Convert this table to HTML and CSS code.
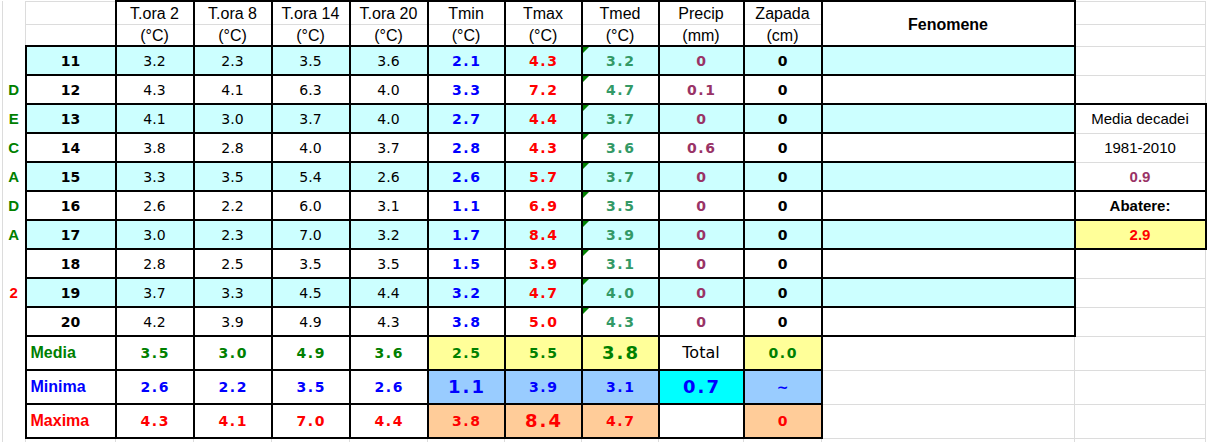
FILE: index.html
```html
<!DOCTYPE html>
<html lang="ro">
<head>
<meta charset="utf-8">
<title>Decada 2</title>
<link rel="stylesheet" href="styles.css">
</head>
<body>
<table class="sheet">
  <colgroup>
    <col class="c-a"><col class="c-b">
    <col class="c-w"><col class="c-w"><col class="c-w"><col class="c-w">
    <col class="c-n"><col class="c-n"><col class="c-n">
    <col class="c-j"><col class="c-k"><col class="c-l"><col class="c-m">
  </colgroup>
  <tr class="r-h1">
    <td class="a"></td><td></td>
    <td class="ht">T.ora 2</td><td class="ht">T.ora 8</td><td class="ht">T.ora 14</td><td class="ht">T.ora 20</td>
    <td class="ht">Tmin</td><td class="ht">Tmax</td><td class="ht">Tmed</td><td class="ht">Precip</td><td class="ht">Zapada</td>
    <td class="fen" rowspan="2">Fenomene</td><td></td>
  </tr>
  <tr class="r-h2">
    <td class="a"></td><td></td>
    <td class="hb">(°C)</td><td class="hb">(°C)</td><td class="hb">(°C)</td><td class="hb">(°C)</td>
    <td class="hb">(°C)</td><td class="hb">(°C)</td><td class="hb">(°C)</td><td class="hb">(mm)</td><td class="hb">(cm)</td>
    <td></td>
  </tr>

  <tr class="r-d cy">
    <td class="a"></td><td class="k day">11</td>
    <td class="k n">3.2</td><td class="k n">2.3</td><td class="k n">3.5</td><td class="k n">3.6</td>
    <td class="k m tmin">2.1</td><td class="k m tmax">4.3</td><td class="k m tmed">3.2</td><td class="k m prec">0</td><td class="k m zap">0</td>
    <td class="k"></td><td></td>
  </tr>
  <tr class="r-d">
    <td class="a">D</td><td class="k day">12</td>
    <td class="k n">4.3</td><td class="k n">4.1</td><td class="k n">6.3</td><td class="k n">4.0</td>
    <td class="k m tmin">3.3</td><td class="k m tmax">7.2</td><td class="k m tmed">4.7</td><td class="k m prec">0.1</td><td class="k m zap">0</td>
    <td class="k"></td><td></td>
  </tr>
  <tr class="r-d cy">
    <td class="a">E</td><td class="k day">13</td>
    <td class="k n">4.1</td><td class="k n">3.0</td><td class="k n">3.7</td><td class="k n">4.0</td>
    <td class="k m tmin">2.7</td><td class="k m tmax">4.4</td><td class="k m tmed">3.7</td><td class="k m prec">0</td><td class="k m zap">0</td>
    <td class="k"></td><td class="bx-top plain">Media decadei</td>
  </tr>
  <tr class="r-d">
    <td class="a">C</td><td class="k day">14</td>
    <td class="k n">3.8</td><td class="k n">2.8</td><td class="k n">4.0</td><td class="k n">3.7</td>
    <td class="k m tmin">2.8</td><td class="k m tmax">4.3</td><td class="k m tmed">3.6</td><td class="k m prec">0.6</td><td class="k m zap">0</td>
    <td class="k"></td><td class="bx-mid plain">1981-2010</td>
  </tr>
  <tr class="r-d cy">
    <td class="a">A</td><td class="k day">15</td>
    <td class="k n">3.3</td><td class="k n">3.5</td><td class="k n">5.4</td><td class="k n">2.6</td>
    <td class="k m tmin">2.6</td><td class="k m tmax">5.7</td><td class="k m tmed">3.7</td><td class="k m prec">0</td><td class="k m zap">0</td>
    <td class="k"></td><td class="bx-bot norm">0.9</td>
  </tr>
  <tr class="r-d">
    <td class="a">D</td><td class="k day">16</td>
    <td class="k n">2.6</td><td class="k n">2.2</td><td class="k n">6.0</td><td class="k n">3.1</td>
    <td class="k m tmin">1.1</td><td class="k m tmax">6.9</td><td class="k m tmed">3.5</td><td class="k m prec">0</td><td class="k m zap">0</td>
    <td class="k"></td><td class="k abat">Abatere:</td>
  </tr>
  <tr class="r-d cy">
    <td class="a">A</td><td class="k day">17</td>
    <td class="k n">3.0</td><td class="k n">2.3</td><td class="k n">7.0</td><td class="k n">3.2</td>
    <td class="k m tmin">1.7</td><td class="k m tmax">8.4</td><td class="k m tmed">3.9</td><td class="k m prec">0</td><td class="k m zap">0</td>
    <td class="k"></td><td class="k dev">2.9</td>
  </tr>
  <tr class="r-d">
    <td class="a"></td><td class="k day">18</td>
    <td class="k n">2.8</td><td class="k n">2.5</td><td class="k n">3.5</td><td class="k n">3.5</td>
    <td class="k m tmin">1.5</td><td class="k m tmax">3.9</td><td class="k m tmed">3.1</td><td class="k m prec">0</td><td class="k m zap">0</td>
    <td class="k"></td><td></td>
  </tr>
  <tr class="r-d cy">
    <td class="a red">2</td><td class="k day">19</td>
    <td class="k n">3.7</td><td class="k n">3.3</td><td class="k n">4.5</td><td class="k n">4.4</td>
    <td class="k m tmin">3.2</td><td class="k m tmax">4.7</td><td class="k m tmed">4.0</td><td class="k m prec">0</td><td class="k m zap">0</td>
    <td class="k"></td><td></td>
  </tr>
  <tr class="r-d">
    <td class="a"></td><td class="k day">20</td>
    <td class="k n">4.2</td><td class="k n">3.9</td><td class="k n">4.9</td><td class="k n">4.3</td>
    <td class="k m tmin">3.8</td><td class="k m tmax">5.0</td><td class="k m tmed">4.3</td><td class="k m prec">0</td><td class="k m zap">0</td>
    <td class="k"></td><td></td>
  </tr>

  <tr class="r-s">
    <td class="a"></td><td class="k lbl green">Media</td>
    <td class="k m green">3.5</td><td class="k m green">3.0</td><td class="k m green">4.9</td><td class="k m green">3.6</td>
    <td class="k m green yel">2.5</td><td class="k m green yel">5.5</td><td class="k m green yel big">3.8</td><td class="k total">Total</td><td class="k m green yel">0.0</td>
    <td></td><td></td>
  </tr>
  <tr class="r-s">
    <td class="a"></td><td class="k lbl blue">Minima</td>
    <td class="k m blue">2.6</td><td class="k m blue">2.2</td><td class="k m blue">3.5</td><td class="k m blue">2.6</td>
    <td class="k m blue lb big">1.1</td><td class="k m blue lb">3.9</td><td class="k m blue lb">3.1</td><td class="k m blue cyan big">0.7</td><td class="k m blue lb">~</td>
    <td></td><td></td>
  </tr>
  <tr class="r-s">
    <td class="a"></td><td class="k lbl red">Maxima</td>
    <td class="k m red">4.3</td><td class="k m red">4.1</td><td class="k m red">7.0</td><td class="k m red">4.4</td>
    <td class="k m red peach">3.8</td><td class="k m red peach big">8.4</td><td class="k m red peach">4.7</td><td class="k"></td><td class="k m red peach">0</td>
    <td></td><td></td>
  </tr>
  <tr class="r-e">
    <td class="a"></td><td></td><td></td><td></td><td></td><td></td><td></td><td></td><td></td><td></td><td></td><td></td><td></td>
  </tr>
</table>
</body>
</html>
```

FILE: styles.css
```css
html, body {
  margin: 0;
  padding: 0;
  background: #ffffff;
  overflow: hidden;
}

.sheet {
  margin-left: 2px;
  border-collapse: collapse;
  table-layout: fixed;
  width: 1203px;
  font-family: "Liberation Sans", Arial, sans-serif;
  font-size: 16px;
  color: #000;
}

.c-a { width: 23px; }
.c-b { width: 90px; }
.c-w { width: 78px; }
.c-n { width: 77px; }
.c-j { width: 85px; }
.c-k { width: 78px; }
.c-l { width: 253px; }
.c-m { width: 131px; }

.sheet td {
  border: 1px solid #dcdcdc;
  padding: 0;
  text-align: center;
  vertical-align: middle;
  white-space: nowrap;
  overflow: hidden;
  line-height: 1;
}

.r-h1 { height: 23px; }
.r-h2 { height: 22px; }
.r-d { height: 29px; }
.r-s { height: 34px; }
.r-e { height: 12px; }

/* column A letters */
.sheet td.a {
  border-top: none;
  border-bottom: none;
  font-weight: bold;
  font-size: 15px;
  color: #008000;
}
.sheet td.a.red { color: #ff0000; }

/* header cells */
.sheet td.ht {
  border-top: 2px solid #000;
  border-left: 2px solid #000;
  border-right: 2px solid #000;
  vertical-align: bottom;
  padding-bottom: 2px;
}
.sheet td.hb {
  border-bottom: 2px solid #000;
  border-left: 2px solid #000;
  border-right: 2px solid #000;
  vertical-align: top;
  padding-top: 3px;
}
.sheet td.fen {
  border: 2px solid #000;
  font-weight: bold;
  padding-top: 2px;
}

/* bordered cells */
.sheet td.k { border: 2px solid #000; }

.cy td.k { background: #ccffff; }

.day {
  font-family: "DejaVu Sans", sans-serif;
  font-weight: bold;
  font-size: 14px;
}
.n {
  font-family: "DejaVu Sans", sans-serif;
  font-size: 14px;
}
.m {
  font-family: "DejaVu Sans", sans-serif;
  font-weight: bold;
  font-size: 14px;
  letter-spacing: 1.5px;
  text-indent: 1.5px;
}
.tmin { color: #0000ff; }
.tmax { color: #ff0000; }
.prec { color: #993366; }
.zap { color: #000000; }
.sheet td.tmed {
  color: #339966;
  position: relative;
}
.sheet td.tmed::before {
  content: "";
  position: absolute;
  top: 0;
  left: 0;
  width: 0;
  height: 0;
  border-top: 6px solid #008000;
  border-right: 6px solid transparent;
}

.green { color: #008000; }
.blue { color: #0000ff; }
.red { color: #ff0000; }

.sheet td.lbl {
  text-align: left;
  padding-left: 4px;
  font-family: "Liberation Sans", Arial, sans-serif;
  font-weight: bold;
  font-size: 16px;
  letter-spacing: 0;
  text-indent: 0;
}
.sheet td.yel { background: #ffff99; }
.sheet td.lb { background: #99ccff; }
.sheet td.cyan { background: #00ffff; }
.sheet td.peach { background: #ffcc99; }
.big {
  font-size: 18px;
  letter-spacing: 2px;
  text-indent: 2px;
}

.total {
  font-family: "DejaVu Sans", sans-serif;
  font-size: 16px;
}

/* right-hand reference box */
.sheet td.bx-top {
  border-top: 2px solid #000;
  border-left: 2px solid #000;
  border-right: 2px solid #000;
}
.sheet td.bx-mid {
  border-left: 2px solid #000;
  border-right: 2px solid #000;
}
.sheet td.bx-bot {
  border-left: 2px solid #000;
  border-right: 2px solid #000;
  border-bottom: 2px solid #000;
}
.plain { font-size: 15px; }
.norm {
  font-size: 15px;
  font-weight: bold;
  color: #993366;
}
.abat {
  font-size: 15px;
  font-weight: bold;
}
.sheet td.dev {
  font-size: 15px;
  font-weight: bold;
  color: #ff0000;
  background: #ffff99;
}
```
